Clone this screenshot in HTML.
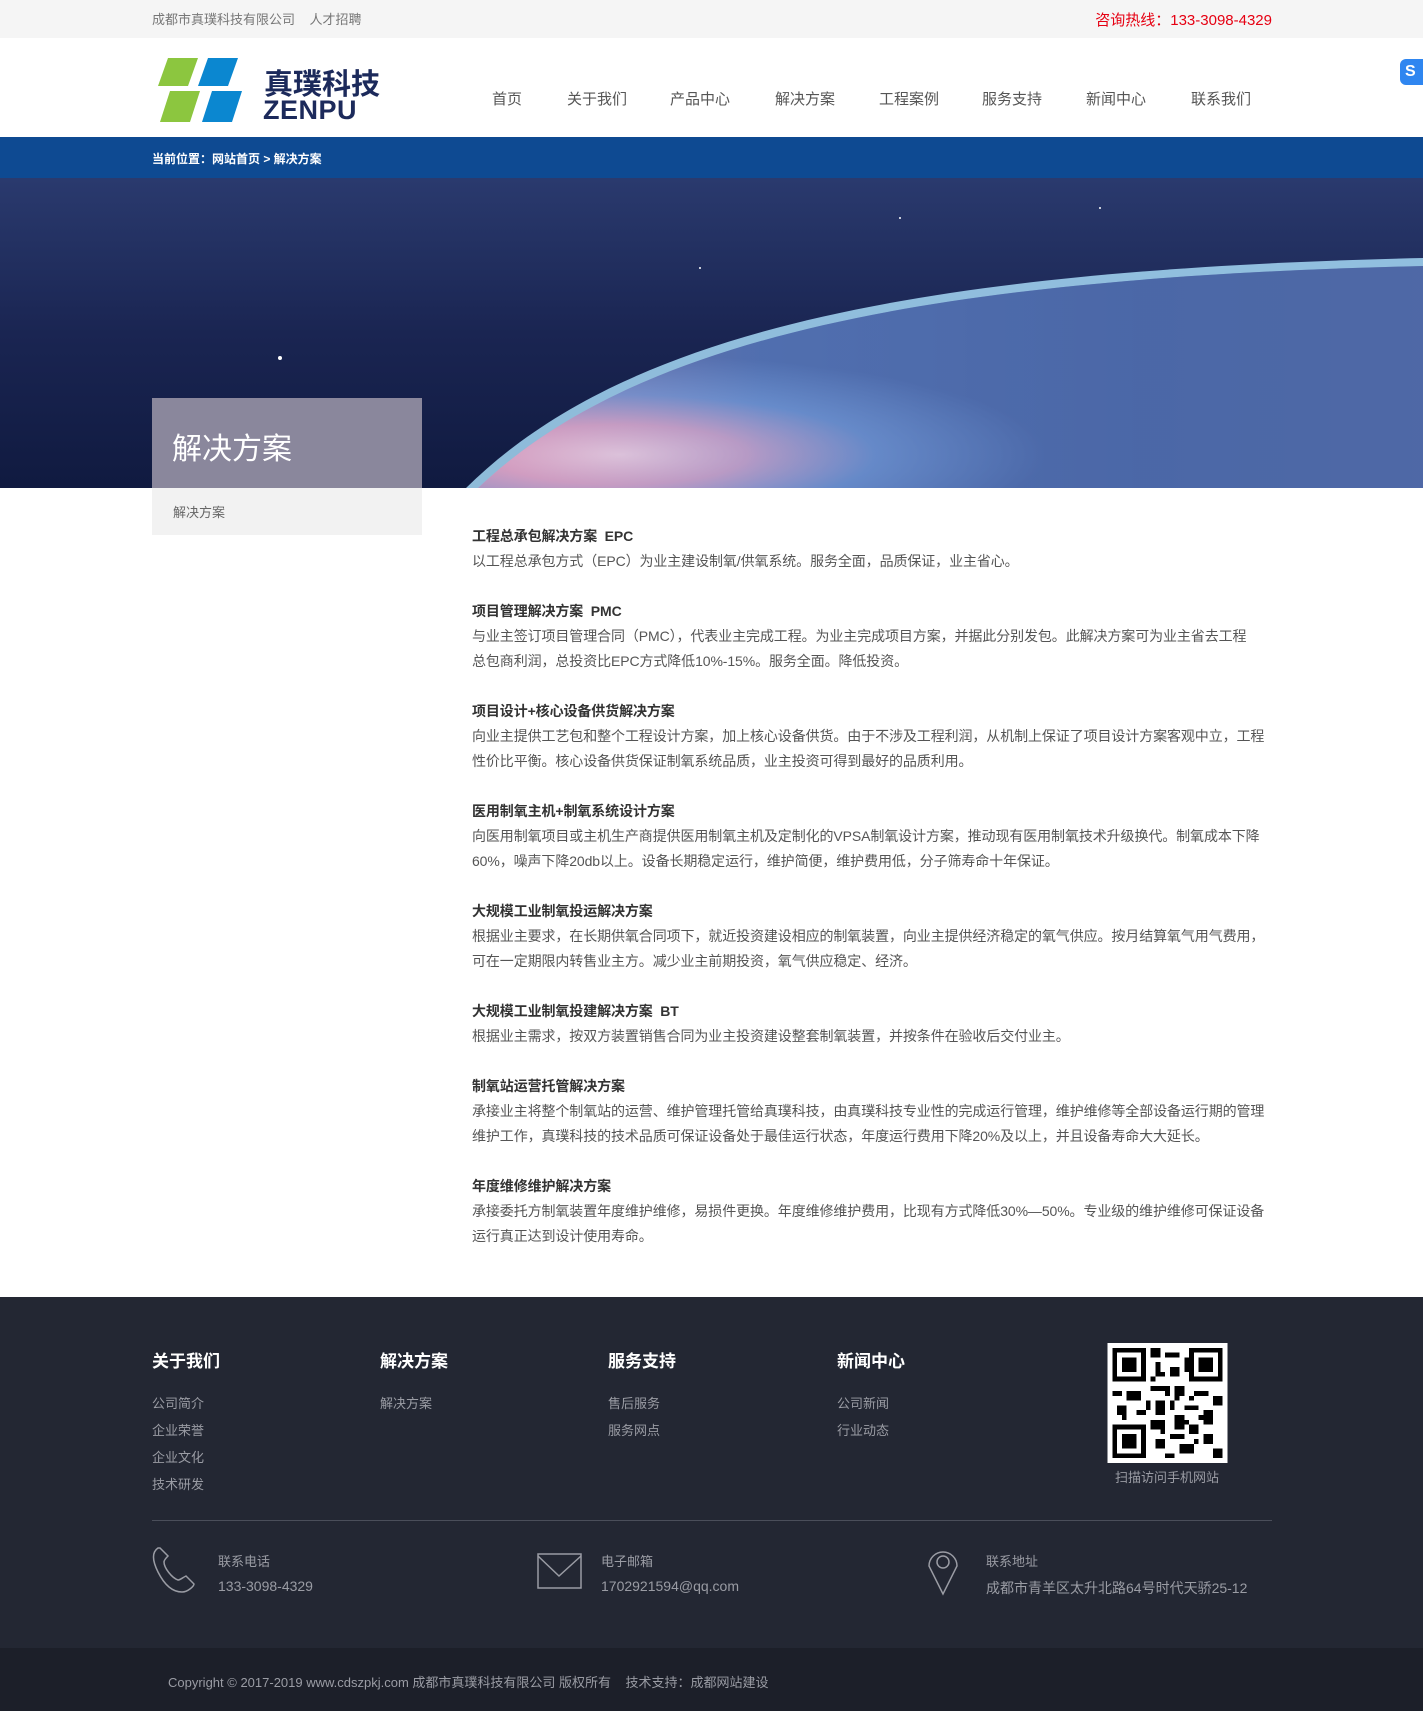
<!DOCTYPE html>
<html><head><meta charset="utf-8">
<style>
*{margin:0;padding:0;box-sizing:border-box}
body{width:1423px;height:1711px;overflow:hidden;background:#fff;font-family:"Liberation Sans","Noto Sans CJK SC",sans-serif;position:relative}
.a{position:absolute;white-space:nowrap}
.top{left:0;top:0;width:1423px;height:38px;background:#f5f5f5}
.nav span{position:absolute;top:88px;font-size:15px;color:#555;transform:translateX(-50%)}
.bc{left:0;top:137px;width:1423px;height:41px;background:#0e4a92}
.ct{left:472px;width:802px;font-size:14px;color:#555;line-height:25px;white-space:normal;letter-spacing:-0.1px}
.ct h4{font-size:14px;color:#333;font-weight:bold;line-height:25px}
.ct p{margin-bottom:25px}
.foot{left:0;top:1297px;width:1423px;height:351px;background:#232733}
.fh{font-size:17px;color:#fff;font-weight:bold;top:1347px}
.fl{font-size:13px;color:#9a9ca4}
</style></head><body>
<div class="a top"></div>
<div class="a" style="left:152px;top:9px;font-size:13px;color:#777">成都市真璞科技有限公司 &nbsp;&nbsp; 人才招聘</div>
<div class="a" style="right:151px;top:9px;font-size:15px;color:#e60012">咨询热线：133-3098-4329</div>
<svg class="a" style="left:154px;top:58px" width="100" height="66" viewBox="0 0 100 66">
<polygon points="14,0 44,0 34,28 4,28" fill="#8cc63f"/><polygon points="54,0 84,0 74,28 44,28" fill="#0b87d0"/>
<polygon points="16,33 46,33 36,64 6,64" fill="#8cc63f"/><polygon points="58,33 88,33 78,64 48,64" fill="#0b87d0"/>
</svg>
<div class="a" style="left:264px;top:61px;font-size:29px;font-weight:bold;color:#1c2a5b">真璞科技</div>
<div class="a" style="left:263px;top:96px;font-size:27px;font-weight:bold;color:#1c2a5b;letter-spacing:0.5px;line-height:28px">ZENPU</div>
<div class="nav"><span style="left:507px">首页</span><span style="left:597px">关于我们</span><span style="left:700px">产品中心</span><span style="left:805px">解决方案</span><span style="left:909px">工程案例</span><span style="left:1012px">服务支持</span><span style="left:1116px">新闻中心</span><span style="left:1221px">联系我们</span></div>
<div class="a" style="left:1400px;top:59px;width:30px;height:26px;background:#2f86f0;border-radius:6px;color:#fff;font-weight:bold;font-size:16px;padding-left:5px;line-height:26px">S</div>
<div class="a bc"></div>
<div class="a" style="left:152px;top:150px;font-size:12px;color:#fff;font-weight:bold">当前位置：网站首页 &gt; 解决方案</div>
<svg class="a" style="left:0;top:178px" width="1423" height="310">
<defs>
<linearGradient id="sky" x1="0" y1="0" x2="0" y2="1"><stop offset="0" stop-color="#2a3a6e"/><stop offset="0.5" stop-color="#1a2552"/><stop offset="1" stop-color="#101a40"/></linearGradient>
<radialGradient id="glow" cx="0.15" cy="0.85" r="0.45"><stop offset="0" stop-color="#f6d6e4"/><stop offset="0.3" stop-color="#d49cc0"/><stop offset="0.6" stop-color="#5d86c8"/><stop offset="1" stop-color="#3a5a9e"/></radialGradient>
<linearGradient id="earth" x1="0" y1="0" x2="1" y2="0"><stop offset="0" stop-color="#d8a0c0"/><stop offset="0.3" stop-color="#7a95cf"/><stop offset="0.7" stop-color="#6a80b8"/><stop offset="1" stop-color="#7583b4"/></linearGradient>
</defs>
<rect width="1423" height="310" fill="url(#sky)"/>
<path d="M466 310 C620 158 900 92 1423 80 L1423 310 Z" fill="#aee4ff" opacity="0.8"/>
<path d="M478 310 C630 166 905 100 1423 88 L1423 310 Z" fill="url(#earth)"/>
<path d="M478 310 C630 166 905 100 1423 88 L1423 310 Z" fill="url(#glow)" opacity="0.65"/>
<circle cx="280" cy="180" r="2" fill="#fff"/><circle cx="900" cy="40" r="1" fill="#fff"/><circle cx="1100" cy="30" r="1" fill="#fff"/><circle cx="700" cy="90" r="1" fill="#fff"/>
</svg>
<div class="a" style="left:152px;top:398px;width:270px;height:90px;background:#8a879c"></div>
<div class="a" style="left:172px;top:424px;font-size:30px;color:#fff">解决方案</div>
<div class="a" style="left:152px;top:488px;width:270px;height:47px;background:#f2f2f2"></div>
<div class="a" style="left:173px;top:502px;font-size:13px;color:#666">解决方案</div>
<div class="a ct" style="top:524px">
<h4>工程总承包解决方案&nbsp; EPC</h4><p>以工程总承包方式（EPC）为业主建设制氧/供氧系统。服务全面，品质保证，业主省心。</p>
<h4>项目管理解决方案&nbsp; PMC</h4><p>与业主签订项目管理合同（PMC），代表业主完成工程。为业主完成项目方案，并据此分别发包。此解决方案可为业主省去工程<br>总包商利润，总投资比EPC方式降低10%-15%。服务全面。降低投资。</p>
<h4>项目设计+核心设备供货解决方案</h4><p>向业主提供工艺包和整个工程设计方案，加上核心设备供货。由于不涉及工程利润，从机制上保证了项目设计方案客观中立，工程性价比平衡。核心设备供货保证制氧系统品质，业主投资可得到最好的品质利用。</p>
<h4>医用制氧主机+制氧系统设计方案</h4><p>向医用制氧项目或主机生产商提供医用制氧主机及定制化的VPSA制氧设计方案，推动现有医用制氧技术升级换代。制氧成本下降60%，噪声下降20db以上。设备长期稳定运行，维护简便，维护费用低，分子筛寿命十年保证。</p>
<h4>大规模工业制氧投运解决方案</h4><p>根据业主要求，在长期供氧合同项下，就近投资建设相应的制氧装置，向业主提供经济稳定的氧气供应。按月结算氧气用气费用，可在一定期限内转售业主方。减少业主前期投资，氧气供应稳定、经济。</p>
<h4>大规模工业制氧投建解决方案&nbsp; BT</h4><p>根据业主需求，按双方装置销售合同为业主投资建设整套制氧装置，并按条件在验收后交付业主。</p>
<h4>制氧站运营托管解决方案</h4><p>承接业主将整个制氧站的运营、维护管理托管给真璞科技，由真璞科技专业性的完成运行管理，维护维修等全部设备运行期的管理维护工作，真璞科技的技术品质可保证设备处于最佳运行状态，年度运行费用下降20%及以上，并且设备寿命大大延长。</p>
<h4>年度维修维护解决方案</h4><p>承接委托方制氧装置年度维护维修，易损件更换。年度维修维护费用，比现有方式降低30%—50%。专业级的维护维修可保证设备运行真正达到设计使用寿命。</p>
</div>
<div class="a foot"></div>
<div class="a fh" style="left:152px">关于我们</div><div class="a fh" style="left:380px">解决方案</div><div class="a fh" style="left:608px">服务支持</div><div class="a fh" style="left:837px">新闻中心</div>
<div class="a fl" style="left:152px;top:1390px;line-height:27px">公司简介<br>企业荣誉<br>企业文化<br>技术研发</div>
<div class="a fl" style="left:380px;top:1390px;line-height:27px">解决方案</div>
<div class="a fl" style="left:608px;top:1390px;line-height:27px">售后服务<br>服务网点</div>
<div class="a fl" style="left:837px;top:1390px;line-height:27px">公司新闻<br>行业动态</div>
<svg class="a" style="left:1107px;top:1343px" width="121" height="120" viewBox="0 0 25 25" shape-rendering="crispEdges">
<rect width="25" height="25" fill="#fff"/>
<g fill="#000">
<rect x="1" y="1" width="7" height="7"/><rect x="2" y="2" width="5" height="5" fill="#fff"/><rect x="3" y="3" width="3" height="3"/>
<rect x="17" y="1" width="7" height="7"/><rect x="18" y="2" width="5" height="5" fill="#fff"/><rect x="19" y="3" width="3" height="3"/>
<rect x="1" y="17" width="7" height="7"/><rect x="2" y="18" width="5" height="5" fill="#fff"/><rect x="3" y="19" width="3" height="3"/>
<path d="M9 1h2v2h-2zM12 2h3v1h-3zM10 4h1v3h-1zM13 5h2v2h-2zM9 9h3v1h-3zM14 9h2v2h-2zM1 10h2v1h-2zM4 10h3v2h-3zM18 10h3v1h-3zM22 11h2v2h-2zM10 12h2v3h-2zM13 12h1v2h-1zM16 13h3v1h-3zM2 13h2v2h-2zM6 14h2v1h-2zM20 14h2v3h-2zM9 16h3v2h-3zM14 15h2v3h-2zM17 17h2v2h-2zM10 20h2v2h-2zM13 19h3v1h-3zM15 21h3v2h-3zM20 19h2v2h-2zM22 22h2v2h-2zM12 23h2v1h-2zM18 20h1v1h-1zM11 6h1v1h-1zM16 3h1v3h-1zM9 7h1v1h-1zM12 9h1v2h-1zM8 12h1v2h-1zM3 15h1v1h-1zM11 18h1v1h-1zM14 11h1v1h-1zM17 11h1v1h-1zM19 15h1v1h-1zM16 16h1v1h-1z"/>
</g></svg>
<div class="a fl" style="left:1115px;top:1467px">扫描访问手机网站</div>
<div class="a" style="left:152px;top:1520px;width:1120px;height:1px;background:#4a4e5a"></div>
<svg class="a" style="left:150px;top:1546px" width="48" height="48" fill="none" stroke="#9a9ca4" stroke-width="1.5"><path d="M8 2 C2 6 2 14 8 26 C14 38 22 46 32 46 C38 46 44 40 44 38 L36 30 C32 32 30 34 28 34 C22 32 14 22 14 16 C14 14 16 12 18 10 L10 2 Z"/></svg>
<div class="a fl" style="left:218px;top:1551px">联系电话</div>
<div class="a fl" style="left:218px;top:1578px;font-size:14px">133-3098-4329</div>
<svg class="a" style="left:537px;top:1550px" width="46" height="42" fill="none" stroke="#9a9ca4" stroke-width="1.5"><rect x="1" y="4" width="43" height="34"/><path d="M1 6 L22 26 L44 6"/></svg>
<div class="a fl" style="left:601px;top:1551px">电子邮箱</div>
<div class="a fl" style="left:601px;top:1578px;font-size:14px">1702921594@qq.com</div>
<svg class="a" style="left:926px;top:1546px" width="34" height="50" fill="none" stroke="#9a9ca4" stroke-width="1.5"><path d="M17 48 L3 20 A14 14 0 1 1 31 20 Z"/><circle cx="17" cy="16" r="6"/></svg>
<div class="a fl" style="left:986px;top:1551px">联系地址</div>
<div class="a fl" style="left:986px;top:1578px;font-size:14px">成都市青羊区太升北路64号时代天骄25-12</div>
<div class="a" style="left:0;top:1648px;width:1423px;height:63px;background:#1c1f29"></div>
<div class="a fl" style="left:168px;top:1672px">Copyright © 2017-2019 www.cdszpkj.com 成都市真璞科技有限公司 版权所有 &nbsp;&nbsp; 技术支持：成都网站建设</div>
</body></html>
